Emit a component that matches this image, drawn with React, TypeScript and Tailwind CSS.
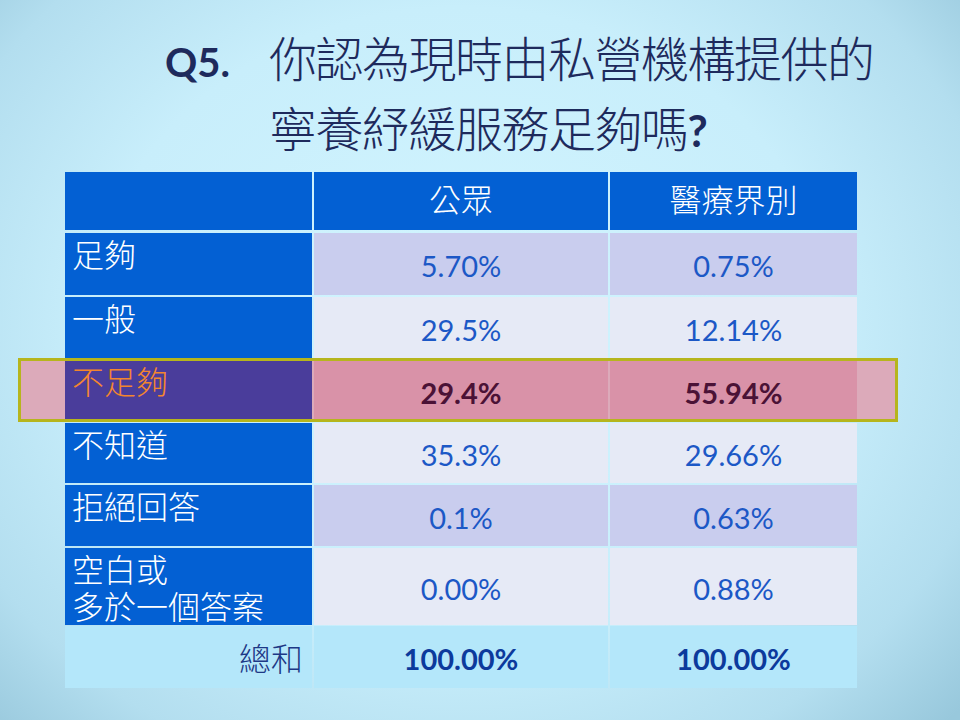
const cjk = "font-['Noto_Sans_CJK_TC','Noto_Sans',sans-serif]";
const num = "font-['Lato','Noto_Sans',sans-serif]";

type Row = {
  label: string;
  a: string;
  b: string;
  h: string;
  bg: string;
};

const rows: Row[] = [
  { label: "足夠", a: "5.70%", b: "0.75%", h: "h-[62px]", bg: "bg-[#c9cdee]" },
  { label: "一般", a: "29.5%", b: "12.14%", h: "h-[61px]", bg: "bg-[#e6eaf6]" },
  { label: "不知道", a: "35.3%", b: "29.66%", h: "h-[60px]", bg: "bg-[#e6eaf6]" },
  { label: "拒絕回答", a: "0.1%", b: "0.63%", h: "h-[61px]", bg: "bg-[#c9cdee]" },
  { label: "空白或\n多於一個答案", a: "0.00%", b: "0.88%", h: "h-[77px]", bg: "bg-[#e6eaf6]" },
];

function LabelCell({ text, h }: { text: string; h: string }) {
  return (
    <div className={`${h} whitespace-pre-line bg-[#0360d3] pl-[7px] pt-[2px] text-[32px] font-light leading-[37px] text-white ${cjk}`}>
      {text}
    </div>
  );
}

function NumCell({ value, h, bg }: { value: string; h: string; bg: string }) {
  return (
    <div className={`${h} ${bg} flex items-center justify-center pt-[4px] text-[29px] text-[#1c58c6] ${num}`}>
      {value}
    </div>
  );
}

export default function App() {
  const [r1, r2, r4, r5, r6] = rows;
  return (
    <div className="relative h-[720px] w-[960px] overflow-hidden bg-[radial-gradient(ellipse_70%_80%_at_48%_45%,#d2f5ff_0%,#c8eefb_55%,#b3deef_82%,#98c8dc_100%)]">
      {/* title */}
      <div className={`h-[166px] pl-[165px] pt-[21px] text-[#1e2a5c] ${cjk}`}>
        <div className="flex h-[70px] items-baseline">
          <span className={`w-[104px] text-[40px] font-bold leading-[70px] ${num}`}>Q5.</span>
          <span className="text-[48px] font-light leading-[70px] tracking-[-1.5px]">你認為現時由私營機構提供的</span>
        </div>
        <div className="flex h-[70px] items-baseline pl-[104px]">
          <span className="text-[48px] font-light leading-[70px] tracking-[-1.5px]">寧養紓緩服務足夠嗎</span>
          <span className={`text-[44px] font-bold leading-[70px] ${num}`}>?</span>
        </div>
      </div>

      {/* highlight fill, behind the table */}
      <div className="absolute left-[18px] top-[358px] z-0 h-[64px] w-[880px] bg-[#dcaaba]" />

      <div className="relative z-10 ml-[65px] mt-[6px] grid w-[792px] grid-cols-[247px_294px_247px] gap-[2px]">
        {/* header */}
        <div className="mb-[1px] h-[58px] bg-[#0360d3]" />
        <div className={`mb-[1px] flex h-[58px] items-center justify-center bg-[#0360d3] pb-[7px] text-[32px] font-light text-white ${cjk}`}>
          公眾
        </div>
        <div className={`mb-[1px] flex h-[58px] items-center justify-center bg-[#0360d3] pb-[7px] text-[32px] font-light text-white ${cjk}`}>
          醫療界別
        </div>

        <LabelCell text={r1.label} h={r1.h} />
        <NumCell value={r1.a} h={r1.h} bg={r1.bg} />
        <NumCell value={r1.b} h={r1.h} bg={r1.bg} />

        <LabelCell text={r2.label} h={r2.h} />
        <NumCell value={r2.a} h={r2.h} bg={r2.bg} />
        <NumCell value={r2.b} h={r2.h} bg={r2.bg} />

        {/* highlighted row */}
        <div className={`h-[61px] bg-[#4a3d9b] pl-[7px] pt-[2px] text-[32px] font-light leading-[37px] text-[#f3862e] ${cjk}`}>
          不足夠
        </div>
        <div className={`flex h-[61px] items-center justify-center bg-[#d992a8] pt-[4px] text-[29px] font-bold text-[#4b1236] ${num}`}>
          29.4%
        </div>
        <div className={`flex h-[61px] items-center justify-center bg-[#d992a8] pt-[4px] text-[29px] font-bold text-[#4b1236] ${num}`}>
          55.94%
        </div>

        <LabelCell text={r4.label} h={r4.h} />
        <NumCell value={r4.a} h={r4.h} bg={r4.bg} />
        <NumCell value={r4.b} h={r4.h} bg={r4.bg} />

        <LabelCell text={r5.label} h={r5.h} />
        <NumCell value={r5.a} h={r5.h} bg={r5.bg} />
        <NumCell value={r5.b} h={r5.h} bg={r5.bg} />

        <LabelCell text={r6.label} h={r6.h} />
        <NumCell value={r6.a} h={r6.h} bg={r6.bg} />
        <NumCell value={r6.b} h={r6.h} bg={r6.bg} />

        {/* total */}
        <div className={`-mt-[1px] flex h-[62px] items-center justify-end bg-[#b4e7fa] pr-[9px] text-[32px] font-light text-[#1d3886] ${cjk}`}>
          總和
        </div>
        <div className={`-mt-[1px] flex h-[62px] items-center justify-center bg-[#b4e7fa] pt-[3px] text-[29px] font-bold text-[#0c3a9c] ${num}`}>
          100.00%
        </div>
        <div className={`-mt-[1px] flex h-[62px] items-center justify-center bg-[#b4e7fa] pt-[3px] text-[29px] font-bold text-[#0c3a9c] ${num}`}>
          100.00%
        </div>
      </div>

      {/* highlight frame, over the table */}
      <div className="pointer-events-none absolute left-[18px] top-[358px] z-20 h-[64px] w-[880px] border-[3px] border-[#b6b51d]" />
    </div>
  );
}
